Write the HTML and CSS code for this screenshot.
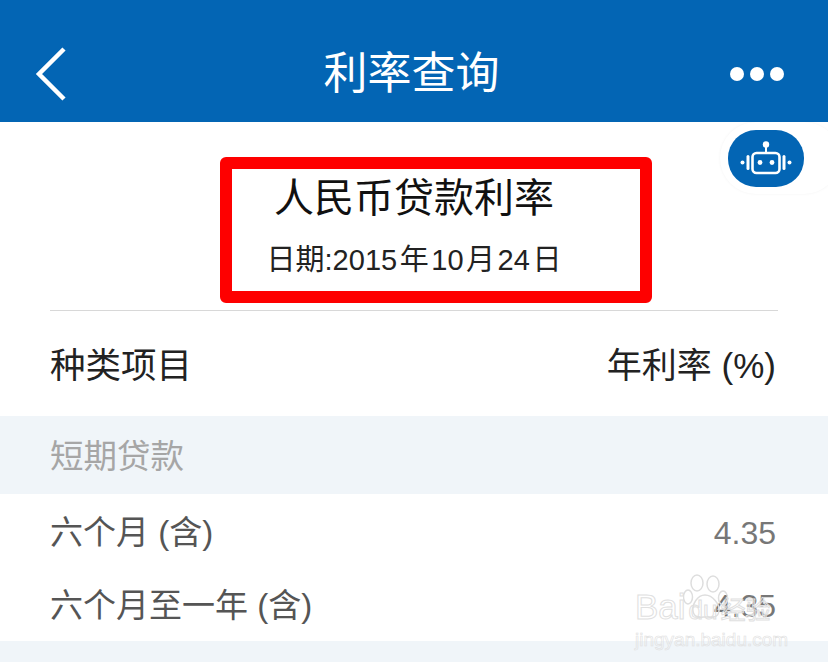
FILE: index.html
```html
<!doctype html>
<html lang="zh-CN">
  <head>
    <meta charset="UTF-8" />
    <meta name="viewport" content="width=device-width, initial-scale=1.0" />
    <title>利率查询</title>
    <link rel="stylesheet" href="styles.css">
  </head>
  <body>
    <div class="page">
      <header class="top-bar">
        <svg class="back" width="32" height="54" viewBox="0 0 32 54">
          <path d="M29 2 L4 27 L29 52" fill="none" stroke="#fff" stroke-width="4.5" />
        </svg>
        <h1 class="top-title">利率查询</h1>
        <div class="more">
          <span class="dot"></span>
          <span class="dot"></span>
          <span class="dot"></span>
        </div>
      </header>

      <div class="robot-tab">
        <div class="robot">
          <svg width="52" height="36" viewBox="0 0 52 36">
            <circle cx="26" cy="3.5" r="3.2" fill="#fff" />
            <path d="M26 6 V12" stroke="#fff" stroke-width="2" />
            <rect x="12.5" y="12" width="27" height="20" rx="4" fill="none" stroke="#fff" stroke-width="2.6" />
            <circle cx="20" cy="21.5" r="2.4" fill="#fff" />
            <circle cx="32" cy="21.5" r="2.4" fill="#fff" />
            <rect x="6.5" y="14" width="3" height="15" rx="1.5" fill="#fff" />
            <rect x="42.5" y="14" width="3" height="15" rx="1.5" fill="#fff" />
            <circle cx="2.5" cy="21.5" r="2" fill="#fff" />
            <circle cx="49.5" cy="21.5" r="2" fill="#fff" />
          </svg>
        </div>
      </div>

      <section class="heading">
        <h2 class="heading-title">人民币贷款利率</h2>
        <p class="heading-date">日期:2015 年 10 月 24 日</p>
      </section>
      <div class="red-mark"></div>

      <div class="table-head">
        <span class="head-name">种类项目</span>
        <span class="head-rate">年利率 (%)</span>
      </div>

      <div class="group">短期贷款</div>
      <div class="rows">
        <div class="row">
          <span>六个月 (含)</span>
          <span class="rate">4.35</span>
        </div>
        <div class="row">
          <span>六个月至一年 (含)</span>
          <span class="rate">4.35</span>
        </div>
      </div>
      <div class="group-empty"></div>

      <div class="watermark">
        <svg class="paw" width="46" height="48" viewBox="0 0 46 48">
          <g fill="none" stroke="#dedede" stroke-width="1.5">
            <ellipse cx="14" cy="10" rx="6" ry="8" />
            <ellipse cx="30" cy="11" rx="6" ry="8" />
            <ellipse cx="5" cy="24" rx="4.5" ry="7" />
            <ellipse cx="40" cy="25" rx="4.5" ry="7" />
            <path d="M22 22 C14 22 9 32 10 38 C11 46 19 44 23 44 C28 44 35 46 36 38 C37 32 30 22 22 22 Z" />
          </g>
        </svg>
        <div class="wm-name">Bai<span class="wm-du">du</span><span class="wm-cn">经验</span></div>
        <div class="wm-url">jingyan.baidu.com</div>
      </div>
    </div>
  </body>
</html>
```

FILE: styles.css
```css
* {
  box-sizing: border-box;
}

body {
  margin: 0;
  padding: 0;
  background: #fff;
  font-family: "Liberation Sans", "Noto Sans CJK SC", sans-serif;
  overflow: hidden;
}

.page {
  position: relative;
  width: 828px;
  height: 662px;
  overflow: hidden;
}

.top-bar {
  display: grid;
  grid-template-columns: 1fr auto 1fr;
  align-items: center;
  height: 122px;
  padding: 25px 44px 0 39px;
  background: #0365b4;
}

.back {
  display: block;
  margin-left: -4px;
}

.top-title {
  margin: 0;
  color: #fff;
  font-size: 44px;
  font-weight: normal;
  line-height: 1;
}

.more {
  display: flex;
  justify-content: flex-end;
  gap: 6px;
}

.dot {
  width: 14px;
  height: 14px;
  border-radius: 50%;
  background: #fff;
}

.robot-tab {
  position: absolute;
  top: 122px;
  left: 720px;
  width: 120px;
  height: 72px;
  padding: 8px;
  background: #fff;
  border-radius: 36px;
  box-shadow: 0 0 3px rgba(0, 0, 0, 0.05);
}

.robot {
  display: flex;
  align-items: center;
  justify-content: center;
  width: 76px;
  height: 57px;
  border-radius: 28px;
  background: #0365b4;
}

.heading {
  height: 189px;
  margin: 0 50px;
  padding-top: 52px;
  text-align: center;
  border-bottom: 1px solid #d8d8d8;
}

.heading-title {
  margin: 0;
  color: #111;
  font-size: 40px;
  font-weight: normal;
  line-height: 48px;
}

.heading-date {
  margin: 18px 0 0;
  color: #222;
  font-size: 29px;
  line-height: 40px;
  word-spacing: -5.5px;
}

.red-mark {
  position: absolute;
  top: 157px;
  left: 220px;
  width: 432px;
  height: 146px;
  border: 12px solid #fe0000;
  border-radius: 6px;
}

.table-head {
  display: flex;
  align-items: center;
  justify-content: space-between;
  height: 105px;
  padding: 0 52px 2px 50px;
  color: #222;
  font-size: 35.5px;
}

.head-rate {
  font-size: 35px;
}

.group {
  display: flex;
  align-items: center;
  height: 78px;
  padding: 0 0 3px 50px;
  background: #f0f5f9;
  color: #a6a6a6;
  font-size: 33.5px;
}

.rows {
  height: 147px;
  padding: 2px 52px 0 50px;
}

.row {
  display: flex;
  align-items: center;
  justify-content: space-between;
  height: 73px;
  color: #555;
  font-size: 33px;
  line-height: 40px;
}

.rate {
  color: #777;
  font-size: 32px;
}

.group-empty {
  height: 21px;
  background: #f0f5f9;
}

.watermark {
  position: absolute;
  top: 573px;
  left: 635px;
  width: 150px;
  color: transparent;
}

.paw {
  position: absolute;
  top: 0;
  left: 48px;
}

.wm-name {
  margin-top: 15px;
  font-size: 35px;
  line-height: 38px;
  white-space: nowrap;
  -webkit-text-stroke: 1px #e0e0e0;
}

.wm-du {
  margin-left: 3px;
  font-size: 26px;
}

.wm-cn {
  margin-left: 3px;
  font-size: 25px;
}

.wm-url {
  font-size: 19px;
  line-height: 22px;
  white-space: nowrap;
  -webkit-text-stroke: 0.6px #e0e0e0;
}
```
